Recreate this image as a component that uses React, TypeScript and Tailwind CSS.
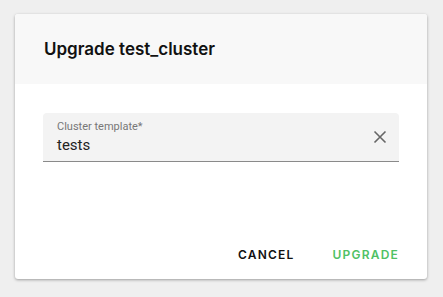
export default function App() {
  return (
    <div className="min-h-[297px] w-[443px] bg-[#efefef] pl-[15px] pt-[14px] font-['Inter',sans-serif]">
      <div className="flex h-[265px] w-[412px] flex-col overflow-hidden rounded-[3px] bg-white shadow-[0_1px_3px_rgba(0,0,0,0.35)]">
        <div className="flex h-[70px] items-center bg-[#f8f8f8] px-[29px] pt-[2px]">
          <h2 className="text-[17px] font-semibold text-[#111]">Upgrade test_cluster</h2>
        </div>
        <div className="flex flex-1 flex-col px-[28px] pt-[29px]">
          <div className="flex h-[49px] items-center rounded-t-[4px] border-b border-[#8a8a8a] bg-[#f3f3f3] pl-[14px] pr-[12px] font-['Roboto',sans-serif]">
            <div className="flex flex-1 flex-col">
              <span className="text-[11px] leading-[13px] text-[#777]">Cluster template*</span>
              <span className="mt-[3px] text-[15px] leading-[18px] text-[#222]">tests</span>
            </div>
            <svg width="14" height="14" viewBox="0 0 14 14" className="text-[#666]">
              <path d="M1.5 1.5 L12.5 12.5 M12.5 1.5 L1.5 12.5" stroke="currentColor" strokeWidth="1.6" fill="none" />
            </svg>
          </div>
          <div className="mt-auto flex items-center justify-end gap-[38px] pb-[15px]">
            <button type="button" className="text-[12px] font-semibold tracking-[0.1em] text-[#111]">CANCEL</button>
            <button type="button" className="text-[12px] font-semibold tracking-[0.1em] text-[#4fc164]">UPGRADE</button>
          </div>
        </div>
      </div>
    </div>
  );
}
